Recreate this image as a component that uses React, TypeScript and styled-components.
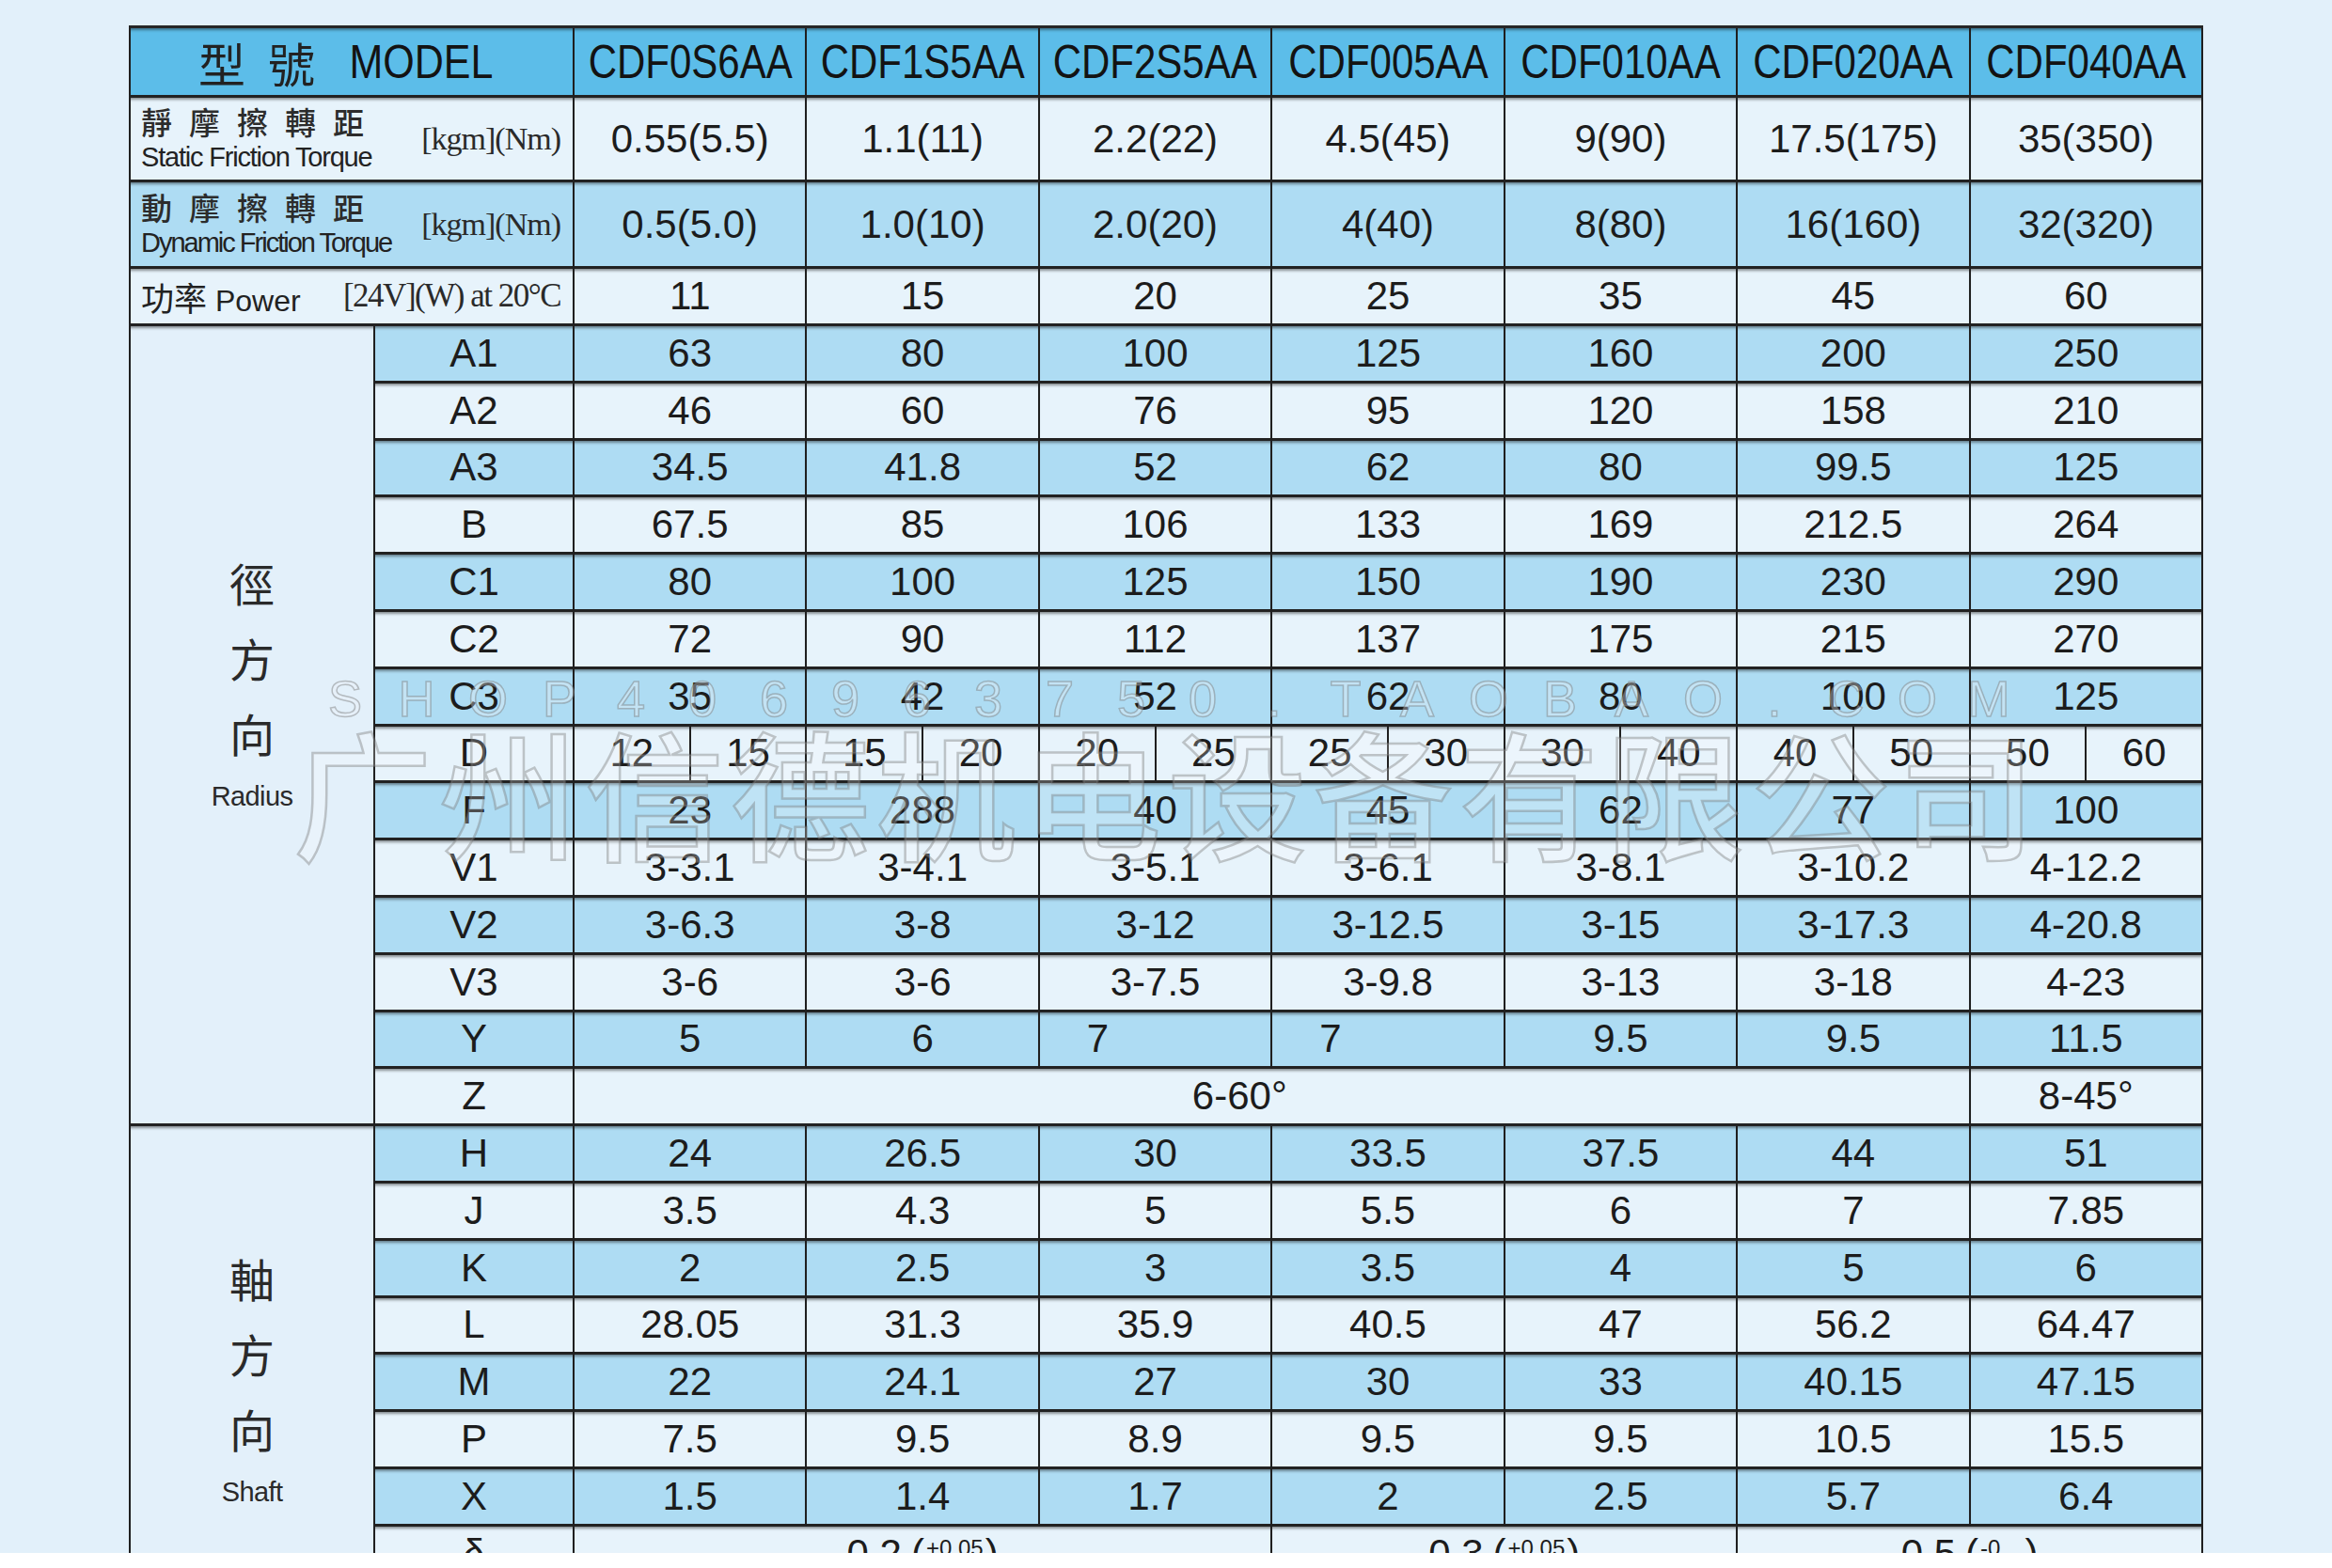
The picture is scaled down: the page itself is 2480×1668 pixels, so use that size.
import React from "react";
import styled, { createGlobalStyle } from "styled-components";

type Tone = "head" | "blue" | "light";

const TONES: Record<Tone, string> = {
  head: "#5cbde9",
  blue: "#aedcf3",
  light: "#e7f3fb",
};

const GlobalStyle = createGlobalStyle`
  html, body {
    margin: 0;
    padding: 0;
    background: #ffffff;
  }
  body {
    font-family: "Liberation Sans", Arial, sans-serif;
  }
`;

const Page = styled.div`
  position: relative;
  box-sizing: border-box;
  height: 1652px;
  padding: 27px 0 0 137px;
  background: #e2f0fa;
  overflow: hidden;
`;

const Sheet = styled.div`
  box-sizing: border-box;
  width: 2206px;
  display: grid;
  grid-template-columns: 260px 212px repeat(7, minmax(0, 1fr));
  grid-template-rows: 74px 90px 92px 61px repeat(21, 60.8px) 61px;
  border-left: 2px solid #1f1f1f;
  border-top: 3px solid #262626;
  color: #1c1c1c;
`;

const Cell = styled.div<{ $tone: Tone; $span?: number; $start?: boolean }>`
  box-sizing: border-box;
  grid-column: span ${(p) => p.$span ?? 1};
  min-width: 0;
  display: flex;
  align-items: center;
  justify-content: ${(p) => (p.$start ? "flex-start" : "center")};
  padding-left: ${(p) => (p.$start ? "50px" : "0")};
  background: ${(p) => TONES[p.$tone]};
  border-right: 2px solid #1f1f1f;
  border-bottom: 3px solid #222;
  box-shadow: inset 0 4px 3px -2px rgba(20, 20, 20, 0.45);
  font-family: "Liberation Sans", Arial, sans-serif;
  font-size: 42px;
  white-space: nowrap;
`;

const HeadCell = styled(Cell)`
  gap: 24px;
  font-size: 50px;
  color: #131313;
`;

const HeadCjk = styled.span`
  font-family: "Noto Sans CJK TC", sans-serif;
  font-size: 50px;
  line-height: 1;
  color: #222;
`;

const Cond = styled.span<{ $sx: number }>`
  display: inline-block;
  transform: scaleX(${(p) => p.$sx});
`;

const SideLabel = styled(Cell)`
  justify-content: space-between;
  padding: 0 13px 0 11px;
`;

const LabelStack = styled.div`
  display: flex;
  flex-direction: column;
`;

const CjkLine = styled.span`
  font-family: "Noto Sans CJK TC", sans-serif;
  font-size: 33px;
  font-weight: 500;
  line-height: 38px;
  letter-spacing: 18px;
  color: #2c2c2c;
`;

const EnLine = styled.span<{ $tight?: boolean }>`
  font-size: 29px;
  line-height: 38px;
  letter-spacing: ${(p) => (p.$tight ? "-2px" : "-1.2px")};
  color: #222;
`;

const Unit = styled.span<{ $small?: boolean }>`
  font-family: "Liberation Serif", "Times New Roman", serif;
  font-size: ${(p) => (p.$small ? "35px" : "34px")};
  letter-spacing: ${(p) => (p.$small ? "-1.5px" : "-1px")};
  color: #2a2a2a;
`;

const PowerName = styled.span`
  font-size: 32px;
  color: #222;
`;

const CjkInline = styled.span`
  font-family: "Noto Sans CJK TC", sans-serif;
  font-size: 35px;
`;

const SplitCell = styled(Cell)`
  align-items: stretch;
`;

const Half = styled.span`
  flex: 1;
  display: flex;
  align-items: center;
  justify-content: center;

  & + & {
    border-left: 2px solid #1f1f1f;
  }
`;

const Shifted = styled.span`
  margin-right: 68px;
`;

const Tolerance = styled.span`
  display: inline-flex;
  align-items: center;
`;

const Paren = styled.span`
  margin: 0 2px 0 10px;

  & ~ & {
    margin: 0 0 0 2px;
  }
`;

const Sup = styled.span`
  font-size: 24px;
  align-self: flex-start;
  margin-top: 4px;
`;

const GroupCell = styled.div<{ $rows: string; $pad: string }>`
  box-sizing: border-box;
  grid-column: 1;
  grid-row: ${(p) => p.$rows};
  display: flex;
  flex-direction: column;
  align-items: center;
  justify-content: center;
  padding: ${(p) => p.$pad};
  background: #e3f0fa;
  border-right: 2px solid #1f1f1f;
  border-bottom: 3px solid #222;
  box-shadow: inset 0 4px 3px -2px rgba(20, 20, 20, 0.45);
`;

const GroupChar = styled.span`
  font-family: "Noto Sans CJK TC", sans-serif;
  font-size: 48px;
  line-height: 80px;
  color: #2a2a2a;
`;

const GroupEn = styled.span`
  margin-top: 8px;
  font-size: 29px;
  line-height: 40px;
  letter-spacing: -0.6px;
  color: #2a2a2a;
`;

const ShopMark = styled.div`
  position: absolute;
  left: 329px;
  top: 713px;
  display: flex;
  pointer-events: none;
`;

const ShopChar = styled.span`
  width: 76px;
  text-align: center;
  font-family: "Liberation Sans", Arial, sans-serif;
  font-size: 54px;
  line-height: 60px;
  color: rgba(235, 240, 245, 0.35);
  -webkit-text-stroke: 1.5px rgba(120, 120, 120, 0.45);
`;

const CompanyMark = styled.div`
  position: absolute;
  left: 312px;
  top: 766px;
  font-family: "Noto Sans CJK SC", sans-serif;
  font-weight: 500;
  font-size: 148px;
  line-height: 1;
  letter-spacing: 7px;
  white-space: nowrap;
  color: rgba(255, 255, 255, 0.22);
  -webkit-text-stroke: 2.5px rgba(120, 120, 120, 0.4);
  pointer-events: none;
`;

const MODELS = [
  "CDF0S6AA",
  "CDF1S5AA",
  "CDF2S5AA",
  "CDF005AA",
  "CDF010AA",
  "CDF020AA",
  "CDF040AA",
];

const STATIC_TORQUE = ["0.55(5.5)", "1.1(11)", "2.2(22)", "4.5(45)", "9(90)", "17.5(175)", "35(350)"];
const DYNAMIC_TORQUE = ["0.5(5.0)", "1.0(10)", "2.0(20)", "4(40)", "8(80)", "16(160)", "32(320)"];
const POWER = ["11", "15", "20", "25", "35", "45", "60"];

type Span = { span: number; content: React.ReactNode };

type SpecRow =
  | { kind: "values"; label: string; values: string[]; startAligned?: number[] }
  | { kind: "split"; label: string; pairs: [string, string][] }
  | { kind: "spans"; label: string; spans: Span[] };

const tol = (value: string, range: string) => (
  <Tolerance>
    {value}
    <Paren>(</Paren>
    <Sup>{range}</Sup>
    <Paren>)</Paren>
  </Tolerance>
);

const ROWS: SpecRow[] = [
  { kind: "values", label: "A1", values: ["63", "80", "100", "125", "160", "200", "250"] },
  { kind: "values", label: "A2", values: ["46", "60", "76", "95", "120", "158", "210"] },
  { kind: "values", label: "A3", values: ["34.5", "41.8", "52", "62", "80", "99.5", "125"] },
  { kind: "values", label: "B", values: ["67.5", "85", "106", "133", "169", "212.5", "264"] },
  { kind: "values", label: "C1", values: ["80", "100", "125", "150", "190", "230", "290"] },
  { kind: "values", label: "C2", values: ["72", "90", "112", "137", "175", "215", "270"] },
  { kind: "values", label: "C3", values: ["35", "42", "52", "62", "80", "100", "125"] },
  {
    kind: "split",
    label: "D",
    pairs: [
      ["12", "15"],
      ["15", "20"],
      ["20", "25"],
      ["25", "30"],
      ["30", "40"],
      ["40", "50"],
      ["50", "60"],
    ],
  },
  { kind: "values", label: "F", values: ["23", "288", "40", "45", "62", "77", "100"] },
  { kind: "values", label: "V1", values: ["3-3.1", "3-4.1", "3-5.1", "3-6.1", "3-8.1", "3-10.2", "4-12.2"] },
  { kind: "values", label: "V2", values: ["3-6.3", "3-8", "3-12", "3-12.5", "3-15", "3-17.3", "4-20.8"] },
  { kind: "values", label: "V3", values: ["3-6", "3-6", "3-7.5", "3-9.8", "3-13", "3-18", "4-23"] },
  { kind: "values", label: "Y", values: ["5", "6", "7", "7", "9.5", "9.5", "11.5"], startAligned: [2, 3] },
  {
    kind: "spans",
    label: "Z",
    spans: [
      { span: 6, content: <Shifted>6-60°</Shifted> },
      { span: 1, content: "8-45°" },
    ],
  },
  { kind: "values", label: "H", values: ["24", "26.5", "30", "33.5", "37.5", "44", "51"] },
  { kind: "values", label: "J", values: ["3.5", "4.3", "5", "5.5", "6", "7", "7.85"] },
  { kind: "values", label: "K", values: ["2", "2.5", "3", "3.5", "4", "5", "6"] },
  { kind: "values", label: "L", values: ["28.05", "31.3", "35.9", "40.5", "47", "56.2", "64.47"] },
  { kind: "values", label: "M", values: ["22", "24.1", "27", "30", "33", "40.15", "47.15"] },
  { kind: "values", label: "P", values: ["7.5", "9.5", "8.9", "9.5", "9.5", "10.5", "15.5"] },
  { kind: "values", label: "X", values: ["1.5", "1.4", "1.7", "2", "2.5", "5.7", "6.4"] },
  {
    kind: "spans",
    label: "δ",
    spans: [
      { span: 3, content: tol("0.2", "+0.05") },
      { span: 2, content: tol("0.3", "+0.05") },
      { span: 2, content: tol("0.5", "-0\u2002\u2002") },
    ],
  },
];

const SHOP_MARK = "SHOP406963750.TAOBAO.COM";

export default function App() {
  const renderRow = (row: SpecRow, index: number) => {
    // rows alternate starting with a blue band at A1
    const tone: Tone = index % 2 === 0 ? "blue" : "light";
    const label = (
      <Cell key={`${row.label}-label`} $tone={tone}>
        {row.label}
      </Cell>
    );

    if (row.kind === "split") {
      return [
        label,
        ...row.pairs.map(([a, b], i) => (
          <SplitCell key={`${row.label}-${i}`} $tone={tone}>
            <Half>{a}</Half>
            <Half>{b}</Half>
          </SplitCell>
        )),
      ];
    }

    if (row.kind === "spans") {
      return [
        label,
        ...row.spans.map((s, i) => (
          <Cell key={`${row.label}-${i}`} $tone={tone} $span={s.span}>
            {s.content}
          </Cell>
        )),
      ];
    }

    return [
      label,
      ...row.values.map((v, i) => (
        <Cell key={`${row.label}-${i}`} $tone={tone} $start={row.startAligned?.includes(i)}>
          {v}
        </Cell>
      )),
    ];
  };

  return (
    <>
      <GlobalStyle />
      <Page>
        <Sheet>
          <HeadCell $tone="head" $span={2}>
            <HeadCjk>型</HeadCjk>
            <HeadCjk>號</HeadCjk>
            <Cond $sx={0.86}>MODEL</Cond>
          </HeadCell>
          {MODELS.map((m) => (
            <HeadCell key={m} $tone="head">
              <Cond $sx={0.84}>{m}</Cond>
            </HeadCell>
          ))}

          <SideLabel $tone="light" $span={2}>
            <LabelStack>
              <CjkLine>靜摩擦轉距</CjkLine>
              <EnLine>Static Friction Torque</EnLine>
            </LabelStack>
            <Unit>[kgm](Nm)</Unit>
          </SideLabel>
          {STATIC_TORQUE.map((v) => (
            <Cell key={v} $tone="light">
              {v}
            </Cell>
          ))}

          <SideLabel $tone="blue" $span={2}>
            <LabelStack>
              <CjkLine>動摩擦轉距</CjkLine>
              <EnLine $tight>Dynamic Friction Torque</EnLine>
            </LabelStack>
            <Unit>[kgm](Nm)</Unit>
          </SideLabel>
          {DYNAMIC_TORQUE.map((v) => (
            <Cell key={v} $tone="blue">
              {v}
            </Cell>
          ))}

          <SideLabel $tone="light" $span={2}>
            <PowerName>
              <CjkInline>功率</CjkInline> Power
            </PowerName>
            <Unit $small>[24V](W) at 20°C</Unit>
          </SideLabel>
          {POWER.map((v, i) => (
            <Cell key={`p-${i}`} $tone="light">
              {v}
            </Cell>
          ))}

          <GroupCell $rows="5 / span 14" $pad="0 0 96px">
            <GroupChar>徑</GroupChar>
            <GroupChar>方</GroupChar>
            <GroupChar>向</GroupChar>
            <GroupEn>Radius</GroupEn>
          </GroupCell>
          <GroupCell $rows="19 / span 8" $pad="46px 0 0">
            <GroupChar>軸</GroupChar>
            <GroupChar>方</GroupChar>
            <GroupChar>向</GroupChar>
            <GroupEn>Shaft</GroupEn>
          </GroupCell>

          {ROWS.flatMap(renderRow)}
        </Sheet>

        <ShopMark>
          {SHOP_MARK.split("").map((ch, i) => (
            <ShopChar key={i}>{ch}</ShopChar>
          ))}
        </ShopMark>
        <CompanyMark>广州信德机电设备有限公司</CompanyMark>
      </Page>
    </>
  );
}
